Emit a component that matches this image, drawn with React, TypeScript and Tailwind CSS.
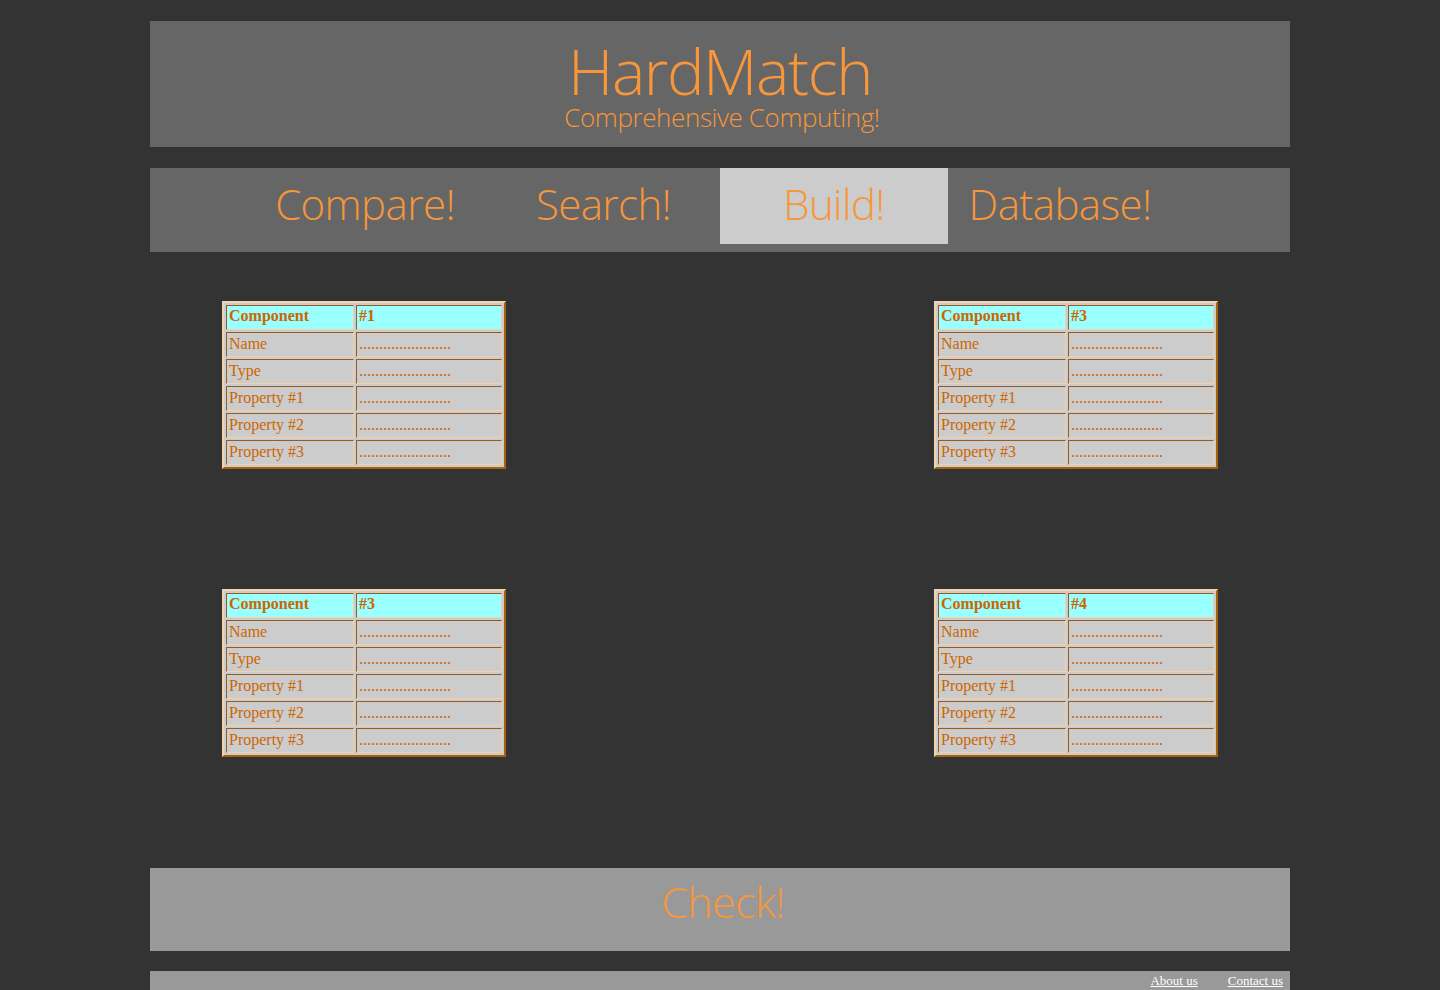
import React from "react";

const ORANGE = "text-[#f7963a]";
const heading = { fontFamily: '"Open Sans", "Noto Sans", sans-serif' };
const serif = { fontFamily: '"Liberation Serif", "Times New Roman", serif' };

function CompTable({ num }: { num: string }) {
  const rows = ["Name", "Type", "Property #1", "Property #2", "Property #3"];
  const cell =
    "border border-t-[#9a5a1e] border-l-[#9a5a1e] border-b-[#f0d2b0] border-r-[#f0d2b0] px-[2px] h-[25px] leading-[20px] align-middle";
  return (
    <table
      className="w-[284px] border-2 border-t-[#f2d4b0] border-l-[#f2d4b0] border-b-[#a8620f] border-r-[#a8620f] bg-[#cccccc] text-[16px] text-[#cc6600] border-separate border-spacing-[2px]"
      style={serif}
    >
      <tbody>
        <tr className="bg-[#99ffff] font-bold">
          <td className={cell + " w-[128px] pb-[3px]"}>Component</td>
          <td className={cell + " pb-[3px]"}>{num}</td>
        </tr>
        {rows.map((r) => (
          <tr key={r}>
            <td className={cell + " pb-[2px]"}>{r}</td>
            <td className={cell + " pb-[2px]"}>.......................</td>
          </tr>
        ))}
      </tbody>
    </table>
  );
}

export default function App() {
  return (
    <div className="min-h-[990px] bg-[#333333] w-full overflow-hidden">
      <div className="w-[1140px] mx-auto pt-[21px]">
        <header className="h-[126px] bg-[#666666] flex flex-col items-center" style={heading}>
          <div className={`${ORANGE} font-light text-[63px] leading-[56px] mt-[22px] tracking-[-1.4px] pl-[0px]`}>HardMatch</div>
          <div className={`${ORANGE} font-light text-[26px] leading-[28px] mt-[4px] tracking-[-0.4px] pl-[4px]`}>Comprehensive Computing!</div>
        </header>

        <nav className="mt-[21px] h-[84px] bg-[#666666] flex pl-[101px]" style={heading}>
          <div className={`w-[228px] h-[76px] flex items-center justify-center pb-[6px] ${ORANGE} font-light text-[42px] tracking-[-0.6px]`}>Compare!</div>
          <div className={`w-[241px] h-[76px] flex items-center justify-center pl-2 pb-[6px] ${ORANGE} font-light text-[42px] tracking-[-0.6px]`}>Search!</div>
          <div className={`w-[228px] h-[76px] flex items-center justify-center pb-[6px] bg-[#cccccc] ${ORANGE} font-light text-[42px] tracking-[-0.6px]`}>Build!</div>
          <div className={`w-[228px] h-[76px] flex items-center justify-center pb-[6px] pr-[4px] ${ORANGE} font-light text-[42px] tracking-[-0.6px]`}>Database!</div>
        </nav>

        <div className="px-[72px] pt-[49px] flex flex-col gap-[120px]">
          <div className="flex justify-between">
            <CompTable num="#1" />
            <CompTable num="#3" />
          </div>
          <div className="flex justify-between">
            <CompTable num="#3" />
            <CompTable num="#4" />
          </div>
        </div>

        <div className="mt-[111px] h-[83px] bg-[#999999] flex items-center justify-center" style={heading}>
          <span className={`${ORANGE} font-light text-[43px] tracking-[-0.6px] mt-[-14px] pl-[6px]`}>Check!</span>
        </div>

        <footer className="mt-[20px] h-[30px] bg-[#999999] flex justify-end items-start gap-[30px] pr-[7px] pt-[1px]" style={serif}>
          <a href="#" className="text-white underline text-[13px] leading-[18px]">About us</a>
          <a href="#" className="text-white underline text-[13px] leading-[18px]">Contact us</a>
        </footer>
      </div>
    </div>
  );
}
